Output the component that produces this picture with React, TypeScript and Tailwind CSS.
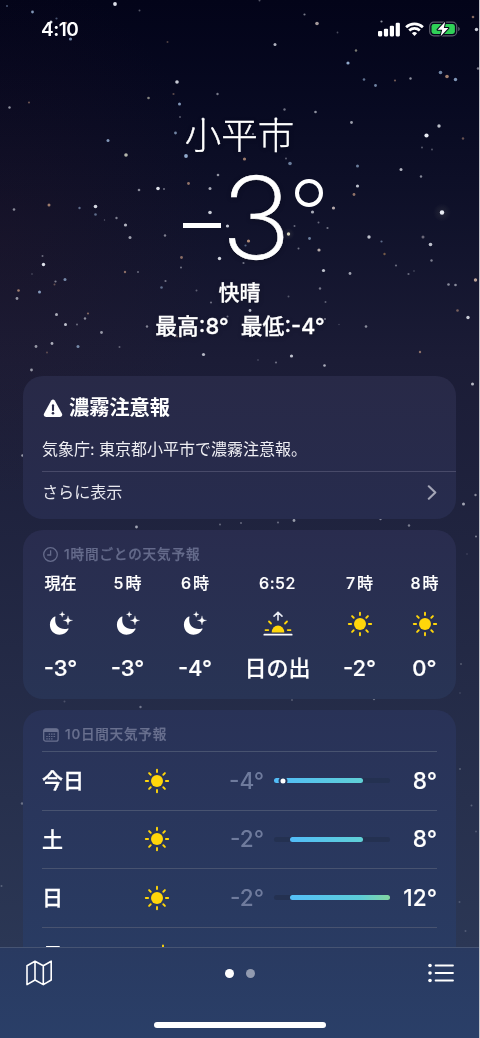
import React from 'react';

// [x, y, radius, opacity, tint]
type Star = [number, number, number, number, string?];

const warm = '#d9a98a';
const cool = '#a9c6ea';

const stars: Star[] = [
  [7, 6, 1.1, 0.4, cool], [32.5, 12, 1.4, 0.75, cool], [115, 4, 1.9, 0.95], [139.5, 10.5, 1, 0.35], [56.5, 18.5, 1.1, 0.4, cool],
  [51, 22, 1.5, 0.9], [66, 23, 1.2, 0.6, warm], [70.5, 39, 1.6, 0.7, cool], [167.5, 42, 1, 0.35, warm], [259.5, 0.5, 1, 0.35],
  [304.5, 14.5, 1.1, 0.5], [317, 23.5, 1.8, 0.7, '#e8d9d2'], [337.5, 32.5, 0.9, 0.3], [381.5, 21.5, 1.1, 0.6], [473, 17, 1.3, 0.6, warm],
  [476.5, 29.5, 1.7, 0.85], [275, 44.5, 1.5, 0.75], [356, 50.5, 1.2, 0.55, '#d8d8b8'], [348, 63, 1.6, 0.85, cool], [364, 79.5, 1.3, 0.55, cool],
  [375.5, 85.5, 1.4, 0.65, cool], [395, 80.5, 1.1, 0.5, warm], [410.5, 78.5, 1.2, 0.6], [440.5, 72.5, 1.8, 0.65, cool], [447, 76.5, 1.8, 0.75, warm],
  [455.5, 79.5, 1.7, 0.75, cool], [478, 68.5, 1.2, 0.5], [177, 82, 1.8, 0.85], [173.5, 94, 1.1, 0.4, warm], [148.5, 98, 1.3, 0.6, '#dad7bf'],
  [217.5, 94, 1.2, 0.5], [179.5, 104, 1.5, 0.75, cool], [180, 117, 1, 0.35], [29, 102.5, 1.1, 0.45, warm], [9.5, 107.5, 1.2, 0.6],
  [284.5, 109.5, 1.2, 0.45], [315.5, 112, 1.3, 0.6], [203, 119, 1.6, 0.8], [276, 119, 1.6, 0.85],
  [108, 140.5, 1.5, 0.75, cool], [126, 155, 1.8, 0.8, '#e0e2cf'], [175.5, 133, 1.4, 0.65, cool], [186, 156, 1.9, 0.85, cool], [218, 175, 1.3, 0.6],
  [158, 188.5, 1.8, 0.95], [164, 189, 1, 0.45], [139, 190, 1.3, 0.55], [188.5, 183.5, 1.4, 0.65, warm], [210, 188.5, 1.5, 0.7],
  [49, 205, 1.5, 0.7, warm], [14, 209.5, 1.3, 0.55], [79.5, 208, 1.2, 0.5, cool], [95.5, 206.5, 1.8, 0.9], [95.5, 214.5, 1.3, 0.5, cool],
  [104.5, 220, 0.7, 0.35], [116.5, 218, 1.2, 0.5], [125.5, 225, 1.6, 0.75], [130, 237.5, 1.5, 0.65], [165, 235.5, 1.2, 0.5],
  [210, 212.5, 1.8, 0.85], [227.5, 226, 1.6, 0.85], [181.5, 257.5, 1.4, 0.6, warm], [219.5, 258.5, 1.7, 0.9], [181, 267.5, 1, 0.45],
  [42.5, 256, 1, 0.4], [43.5, 264.5, 1.7, 0.95], [32, 274, 0.8, 0.3], [65, 279.5, 1.5, 0.65, cool], [55.5, 281.5, 1.1, 0.5],
  [54.5, 284.5, 1, 0.4, warm], [18.5, 290.5, 1.3, 0.7, warm], [17, 298.5, 1.4, 0.6], [39.5, 292, 1.5, 0.75, cool], [125, 272, 1.2, 0.6, warm],
  [138, 272, 1, 0.4], [165.5, 281, 1.1, 0.45], [161.5, 287.5, 1.3, 0.5, cool], [196.5, 290.5, 1, 0.35], [211, 302.5, 1.1, 0.4],
  [56.5, 314.5, 1.5, 0.7], [65.5, 324.5, 1.5, 0.8], [77, 324.5, 1, 0.4], [85, 318.5, 1.2, 0.55], [88, 313.5, 1.1, 0.55, warm],
  [101.5, 332.5, 1.4, 0.6], [147, 326.5, 1.2, 0.5], [36, 346.5, 1.4, 0.6], [52, 343.5, 1.4, 0.7], [47, 352.5, 1, 0.35, warm],
  [78, 346.5, 1.5, 0.65, cool], [119.5, 347, 1, 0.35], [203.5, 354.5, 1.6, 0.75], [31.5, 370, 1.4, 0.6], [177, 336.5, 0.9, 0.4, warm],
  [351.5, 122.5, 1.4, 0.65], [439, 126, 1.7, 0.8], [426.5, 135.5, 2.1, 1],
  [463, 138.5, 1.2, 0.45, warm], [422, 147.5, 1, 0.35], [432, 149.5, 0.9, 0.35], [244.5, 159, 1.6, 0.7, warm], [286, 158.5, 0.9, 0.4],
  [290, 163.5, 1.8, 0.6, cool], [357.5, 166, 1.5, 0.6, cool], [401, 169.5, 1.5, 0.75], [421, 176.5, 1.2, 0.55], [357.5, 186, 1.6, 0.8],
  [354, 194.5, 1.4, 0.65, warm], [333.5, 208, 1.6, 0.8, '#ded0cc'], [312.5, 212, 1.6, 0.7], [318.5, 222.5, 1, 0.4], [294.5, 226, 1, 0.4],
  [327.5, 228, 1.1, 0.45], [288.5, 234, 1.7, 0.9, '#e8e4c9'], [309.5, 238.5, 1.4, 0.6, cool], [319, 250, 1.6, 0.8, '#decfc8'], [298.5, 248.5, 1, 0.45],
  [248.5, 241, 1.6, 0.8, warm], [245.5, 245.5, 1.1, 0.45, cool], [243.5, 263, 1.1, 0.45], [323.5, 270.5, 1.6, 0.8], [350, 273.5, 1.4, 0.65],
  [369, 237, 1.7, 0.8], [381.5, 241.5, 1.1, 0.5, cool], [384.5, 254, 1.2, 0.5, '#d39d60'], [396, 265.5, 1.1, 0.4], [408.5, 274, 1.1, 0.4],
  [414, 271, 0.8, 0.3], [442, 212.5, 2.2, 1], [423, 237, 1.5, 0.5, '#c6bec6'], [430.5, 244.5, 1.8, 0.8], [431.5, 260.5, 1.2, 0.5],
  [475.5, 280, 1.7, 0.8, '#e3c5b1'], [448.5, 284.5, 1.3, 0.55], [455.5, 285, 1.3, 0.55], [457.5, 310.5, 1.3, 0.5, warm], [468, 317.5, 1.7, 0.85],
  [320, 288.5, 1.2, 0.45], [288.5, 296.5, 1, 0.3], [325.5, 302, 1, 0.35], [250, 310.5, 1.4, 0.8], [366, 326.5, 1.3, 0.55],
  [339, 324.5, 0.7, 0.25], [325, 319, 1, 0.5], [291.5, 356, 1.6, 0.8], [324.5, 365.5, 1.3, 0.7], [276, 362.5, 1.1, 0.4],
  [258, 360, 0.8, 0.3], [420, 352, 1.2, 0.6, warm], [227.5, 316.5, 1, 0.4], [253, 134, 1, 0.5],
  [472.5, 384, 1.5, 0.75], [22.5, 455.5, 1.3, 0.6], [475.5, 495, 1.2, 0.5], [463.5, 504, 1.5, 0.65], [294, 520.5, 1.4, 0.6],
  [278, 522.5, 1.1, 0.35], [380.5, 519, 1.2, 0.5], [409, 525.5, 1.2, 0.45], [136.5, 527, 1.4, 0.65], [220, 524.5, 1, 0.35],
  [241, 523, 1, 0.35], [476, 536.5, 1, 0.45], [467, 554, 0.8, 0.2], [461, 664, 1, 0.25], [460, 693, 0.8, 0.2],
  [374, 699, 1.2, 0.35], [292, 700, 1, 0.25], [64.5, 701.5, 1, 0.2], [140.5, 707, 1.2, 0.4], [22, 803.5, 1.2, 0.35],
  [1.5, 886, 1, 0.25], [460, 769, 1, 0.25], [471.5, 805.5, 1, 0.25], [476, 831.5, 1, 0.2], [459.5, 902, 1, 0.2], [465.5, 931, 1, 0.2],
];

function StarField() {
  return (
    <svg className="absolute left-0 top-0" width="479" height="947" viewBox="0 0 479 947" aria-hidden="true">
      <defs>
        <radialGradient id="glow">
          <stop offset="0" stopColor="#d8d6b0" stopOpacity="0.1" />
          <stop offset="1" stopColor="#d8d6b0" stopOpacity="0" />
        </radialGradient>
        <filter id="soft" x="-1%" y="-1%" width="102%" height="102%">
          <feGaussianBlur stdDeviation="0.5" />
        </filter>
      </defs>
      <circle cx="442" cy="212.5" r="9" fill="url(#glow)" />
      <circle cx="288.5" cy="234" r="6" fill="url(#glow)" />
      <g filter="url(#soft)">
        {stars.map(([x, y, r, o, c], i) => (
          <circle key={i} cx={x} cy={y} r={r} fill={c ?? '#e9ecf4'} opacity={o} />
        ))}
      </g>
    </svg>
  );
}

function Sun() {
  return (
    <svg width="26" height="26" viewBox="-13 -13 26 26" className="block">
      <circle r="6" fill="#ffd60a" />
      {[0, 45, 90, 135, 180, 225, 270, 315].map((a) => (
        <path key={a} d="M0-8.9V-11.2" transform={`rotate(${a})`} stroke="#ffd60a" strokeWidth="1.9" strokeLinecap="round" />
      ))}
    </svg>
  );
}

function Moon() {
  return (
    <svg width="26" height="26" viewBox="0.8 -0.4 26 26" className="block" fill="#fff">
      <path d="M8.3 5.7C8.5 5.2 8.2 4.9 7.6 5.2 4.7 6.5 2.7 9.6 2.7 13.3 2.7 19 7 23.3 12.4 23.3 16.4 23.3 19.6 21.2 21.3 17.9 21.6 17.2 21.2 16.9 20.6 17.1 19.6 17.5 18.5 17.6 17.4 17.6 11.8 17.6 8 14 8 8.6 8 7.5 8.1 6.5 8.3 5.7Z" />
      <path d="M15 .2C15.3 2.2 15.8 2.7 17.8 3 15.8 3.3 15.3 3.8 15 5.8 14.7 3.8 14.2 3.3 12.2 3 14.2 2.7 14.7 2.2 15 .2Z" stroke="#fff" strokeWidth=".3" />
      <path d="M20.8 4.4C21.3 7.8 22 8.5 25.4 9 22 9.5 21.3 10.2 20.8 13.6 20.3 10.2 19.6 9.5 16.2 9 19.6 8.5 20.3 7.8 20.8 4.4Z" stroke="#fff" strokeWidth=".3" />
    </svg>
  );
}

function Sunrise() {
  return (
    <svg width="30" height="26" viewBox="0 0 30 26" className="block" fill="none" strokeLinecap="round" strokeLinejoin="round">
      <path d="M15 9.1V1.4M11 5.1 15 1.2 19 5.1" stroke="#e9ebf3" strokeWidth="1.6" />
      <path d="M8.7 21.4A6.3 6.9 0 1 1 21.3 21.4Z" fill="#ffd60a" />
      <path d="M2.5 19.1H5.3M24.7 19.1H27.5M6 10.5 8 12.5M24 10.5 22 12.5" stroke="#ffd60a" strokeWidth="1.8" />
      <path d="M1.3 23.7H28.7" stroke="#fff" strokeWidth="1.7" />
    </svg>
  );
}

function PartlySunny() {
  return (
    <svg width="30" height="26" viewBox="0 0 30 26" className="block">
      <path d="M21 2.4V4M13.5 5.5 15 7M28.5 5.5 27 7" stroke="#ffd60a" strokeWidth="1.9" strokeLinecap="round" />
      <circle cx="21" cy="12" r="5.2" fill="#ffd60a" />
      <path d="M8 24a5.5 5.5 0 0 1-.6-11A7 7 0 0 1 20.6 14 5 5 0 0 1 20 24Z" fill="#fff" />
    </svg>
  );
}

function StatusBar() {
  return (
    <div className="flex h-[58px] items-center justify-between pl-[41px] pr-[18px]">
      <div className="text-[19px] font-semibold leading-none tracking-[-0.5px]">4:10</div>
      <div className="flex items-center">
        <svg width="22" height="15" viewBox="0 0 22 15" fill="#fff">
          <rect x="0" y="9" width="4.2" height="5.4" rx="1.1" />
          <rect x="5.9" y="6.7" width="4.2" height="7.7" rx="1.1" />
          <rect x="11.8" y="3.7" width="4.2" height="10.7" rx="1.1" />
          <rect x="17.7" y="0.8" width="4.2" height="13.6" rx="1.1" />
        </svg>
        <svg className="ml-[5px]" width="19" height="15" viewBox="0 0 19 15" fill="none" stroke="#fff" strokeWidth="2.7">
          <path d="M1.1 5.3A12.2 12.2 0 0 1 17.9 5.3" />
          <path d="M4.2 8.5A7.8 7.8 0 0 1 14.8 8.5" />
          <path d="M6.9 11.3A3.8 3.8 0 0 1 12.1 11.3L9.5 14Z" fill="#fff" stroke="none" />
        </svg>
        <svg className="ml-[5px]" width="32" height="16" viewBox="0 0 32 16">
          <rect x=".7" y="1.2" width="27" height="13.6" rx="4.1" fill="none" stroke="#5c5c6c" strokeWidth="1.2" />
          <path d="M29.2 5.8Q30.8 6.5 30.8 8T29.2 10.2Z" fill="#5c5c6c" />
          <rect x="2.5" y="3" width="23.4" height="10" rx="2.4" fill="#30d158" />
          <path d="M16.2.8 8.6 8.8H13.2L11.6 15.2 19.4 7.1H14.8Z" fill="#fff" stroke="#08091c" strokeWidth="2" strokeLinejoin="round" paintOrder="stroke" />
        </svg>
      </div>
    </div>
  );
}

const hours = [
  { time: '現在', icon: <Moon />, temp: '-3°' },
  { time: '5時', icon: <Moon />, temp: '-3°' },
  { time: '6時', icon: <Moon />, temp: '-4°' },
  { time: '6:52', icon: <Sunrise />, temp: '日の出' },
  { time: '7時', icon: <Sun />, temp: '-2°' },
  { time: '8時', icon: <Sun />, temp: '0°' },
];

const days = [
  { day: '今日', low: '-4°', high: '8°', from: 0, to: 76.5, now: 8 },
  { day: '土', low: '-2°', high: '8°', from: 13.5, to: 76.5 },
  { day: '日', low: '-2°', high: '12°', from: 13.5, to: 100 },
];

function RangeBar({ from, to, now }: { from: number; to: number; now?: number }) {
  return (
    <div className="relative h-[5px] w-[116px] rounded-full bg-[#243151]">
      <div
        className={
          'absolute inset-y-0 rounded-full ' +
          (to === 100 ? 'bg-linear-to-r from-[#55bff8] via-[#5cccd7] via-70% to-[#82d6a0]' : 'bg-linear-to-r from-[#52bcf8] to-[#60d0d6]')
        }
        style={{ left: `${from}%`, width: `${to - from}%` }}
      />
      {now !== undefined && (
        <div className="absolute top-1/2 size-[9px] -translate-x-1/2 -translate-y-1/2 rounded-full border-2 border-[#28365a] bg-white" style={{ left: `${now}%` }} />
      )}
    </div>
  );
}

export default function App() {
  return (
    <div className="h-[1038px] w-[480px] overflow-hidden border-r border-[#c3c3c9] font-['Inter','Noto_Sans_CJK_JP',sans-serif] text-white">
      <div className="relative h-[947px] overflow-hidden bg-linear-to-b from-[#030419] via-[#1b1c36] via-38% to-[#2b3755]">
        <div className="absolute inset-0 bg-radial-[ellipse_45%_28%_at_0%_25%] from-[#301824]/20 to-transparent" />
        <StarField />
        <main className="relative">
          <StatusBar />
          <header className="flex h-[318px] flex-col items-center pt-[52px] [text-shadow:0_1px_5px_rgba(0,0,0,0.25)]">
            <h1 className="mt-px h-[49px] text-[36.5px] font-light leading-[51px] [-webkit-text-stroke:0.4px_white]">小平市</h1>
            <div className="ml-[27px] flex h-[116px] items-start text-[114px] font-extralight leading-[115px]">
              <span className="mt-[63px] block h-[5px] w-[38px] bg-white" />
              <span className="ml-px -mr-px scale-x-[1.04] [-webkit-text-stroke:0.5px_white]">3</span>
              <span className="ml-[7px] mt-[19px] block size-[28px] rounded-full border-[4px] border-white" />
            </div>
            <div className="h-[34px] text-[21px] font-medium leading-[34px] [-webkit-text-stroke:0.3px_white]">快晴</div>
            <div className="ml-px flex h-[34px] gap-[12px] text-[21.8px] font-medium leading-[32px] [-webkit-text-stroke:0.3px_white]">
              <span>最高:8°</span>
              <span>最低:-4°</span>
            </div>
          </header>

          <div className="ml-[23px] flex w-[433px] flex-col gap-[11px]">
            <section className="flex h-[143px] flex-col rounded-[20px] bg-linear-to-b from-[#282947] to-[#272c4e]">
              <div className="flex h-[64px] items-center gap-[6px] pl-[20px] text-[20.2px] font-bold">
                <svg width="20" height="19" viewBox="0 0 20 19">
                  <path d="M8.2 1.6Q10-.6 11.8 1.6L18.9 14.4Q20.2 17.6 17 18H3Q-.2 17.6 1.1 14.4Z" fill="#fff" />
                  <path d="M10 6.2V11.1" stroke="#292a49" strokeWidth="2.1" strokeLinecap="round" />
                  <circle cx="10" cy="14.3" r="1.3" fill="#292a49" />
                </svg>
                <span className="leading-none">濃霧注意報</span>
              </div>
              <div className="ml-[19px] flex h-[31px] items-start text-[16px] leading-[18px] text-[#eeeef3]">気象庁: 東京都小平市で濃霧注意報。</div>
              <div className="ml-[19px] flex h-[42px] items-center justify-between border-t border-[#484a69] pr-[19px] text-[16.1px] text-[#e8e8ef]">
                <span className="-mt-px leading-none">さらに表示</span>
                <svg width="10" height="15" viewBox="0 0 10 15" fill="none" stroke="#a4a6b7" strokeWidth="2.1" strokeLinecap="round" strokeLinejoin="round"><path d="M1.8 1.3 8.3 7.5 1.8 13.7" /></svg>
              </div>
            </section>

            <section className="h-[169px] rounded-[20px] bg-linear-to-b from-[#292c4e] to-[#283455]">
              <div className="flex h-[42px] items-center gap-[6px] pl-[20px] pt-[7px] text-[13.6px] font-medium tracking-[0.85px] text-[#656b8b]">
                <svg width="15" height="15" viewBox="0 0 15 15" fill="none" stroke="currentColor" strokeWidth="1.3"><circle cx="7.5" cy="7.5" r="6.8" /><path d="M7.6 3.2V8H4.2" /></svg>
                <span className="leading-none [-webkit-text-stroke:0.25px]">1時間ごとの天気予報</span>
              </div>
              <div className="ml-[4px] grid grid-cols-[67px_67px_68px_97px_67px_63px]">
                {hours.map((h, i) => (
                  <div key={i} className="flex flex-col items-center whitespace-nowrap font-medium [-webkit-text-stroke:0.2px_white]">
                    <div className={'h-[22px] text-[16px] leading-[22px] ' + (h.time.length === 2 && i > 0 ? 'tracking-[2px] -mr-[2px]' : i === 3 ? 'tracking-[0.6px]' : '')}>{h.time}</div>
                    <div className="flex h-[60px] items-center">{h.icon}</div>
                    <div className="h-[30px] text-[22px] leading-[28px]">{h.temp}</div>
                  </div>
                ))}
              </div>
            </section>

            <section className="h-[310px] rounded-[20px] bg-linear-to-b from-[#293257] to-[#293e66] px-[19px]">
              <div className="flex h-[41px] items-center gap-[6px] pl-px pt-[8px] text-[13.6px] font-medium tracking-[0.75px] text-[#69708f]">
                <svg width="16" height="14" viewBox="0 0 16 14">
                  <rect x=".7" y=".8" width="14.4" height="12.4" rx="2" fill="none" stroke="currentColor" strokeWidth="1.3" />
                  <path d="M.7 3.9V2.8Q.7.8 2.7.8H13.1Q15.1.8 15.1 2.8V3.9Z" fill="currentColor" />
                  <path d="M5.7 6.2H13M3.3 8.5H13M3.3 10.8H10.5" stroke="currentColor" strokeWidth="1.2" strokeDasharray="1.4 1" />
                </svg>
                <span className="leading-none [-webkit-text-stroke:0.25px]">10日間天気予報</span>
              </div>
              {days.map((d) => (
                <div key={d.day} className="flex h-[58.5px] items-center border-t border-[#485370] text-[22.6px] font-medium leading-none">
                  <div className="w-[102px] text-[21px] [-webkit-text-stroke:0.3px_white]">{d.day}</div>
                  <Sun />
                  <div className="w-[94px] pt-px text-right text-[#6f7b9d]">{d.low}</div>
                  <div className="ml-[10px]"><RangeBar from={d.from} to={d.to} now={d.now} /></div>
                  <div className="flex-1 pt-px text-right [-webkit-text-stroke:0.15px_white]">{d.high}</div>
                </div>
              ))}
              <div className="flex h-[58.5px] items-center border-t border-[#485370] text-[21px] font-medium leading-none">
                <div className="-mt-[1.5px] w-[100px] [-webkit-text-stroke:0.3px_white]">月</div>
                <PartlySunny />
              </div>
            </section>
          </div>
        </main>
      </div>

      <footer className="flex h-[91px] flex-col items-center border-t border-[#465473] bg-linear-to-b from-[#293a61] to-[#2a3f68]">
        <nav className="flex h-[50px] w-full items-center justify-between pl-[26px] pr-[25px]">
          <svg width="27" height="26" viewBox="0 0 27 26" fill="none" stroke="#fff" strokeWidth="1.6" strokeLinejoin="round"><path d="M1 5.7 9 1.2 17.3 5.7 25.2 1.2V20L17.3 24.6 9 20 1 24.6ZM9 1.2V20M17.3 5.7V24.6" /></svg>
          <div className="-ml-px flex gap-[12px]">
            <span className="size-[9px] rounded-full bg-white" />
            <span className="size-[9px] rounded-full bg-[#929bb0]" />
          </div>
          <svg width="26" height="20" viewBox="0 0 26 20" stroke="#fff" strokeWidth="1.8" strokeLinecap="round" fill="#fff"><path d="M7.6 2.5H25M7.6 10H25M7.6 17.5H25" /><g stroke="none"><circle cx="2" cy="2.5" r="1.8" /><circle cx="2" cy="10" r="1.8" /><circle cx="2" cy="17.5" r="1.8" /></g></svg>
        </nav>
        <div className="mt-[24px] h-[6px] w-[172px] rounded-full bg-white" />
      </footer>
    </div>
  );
}
